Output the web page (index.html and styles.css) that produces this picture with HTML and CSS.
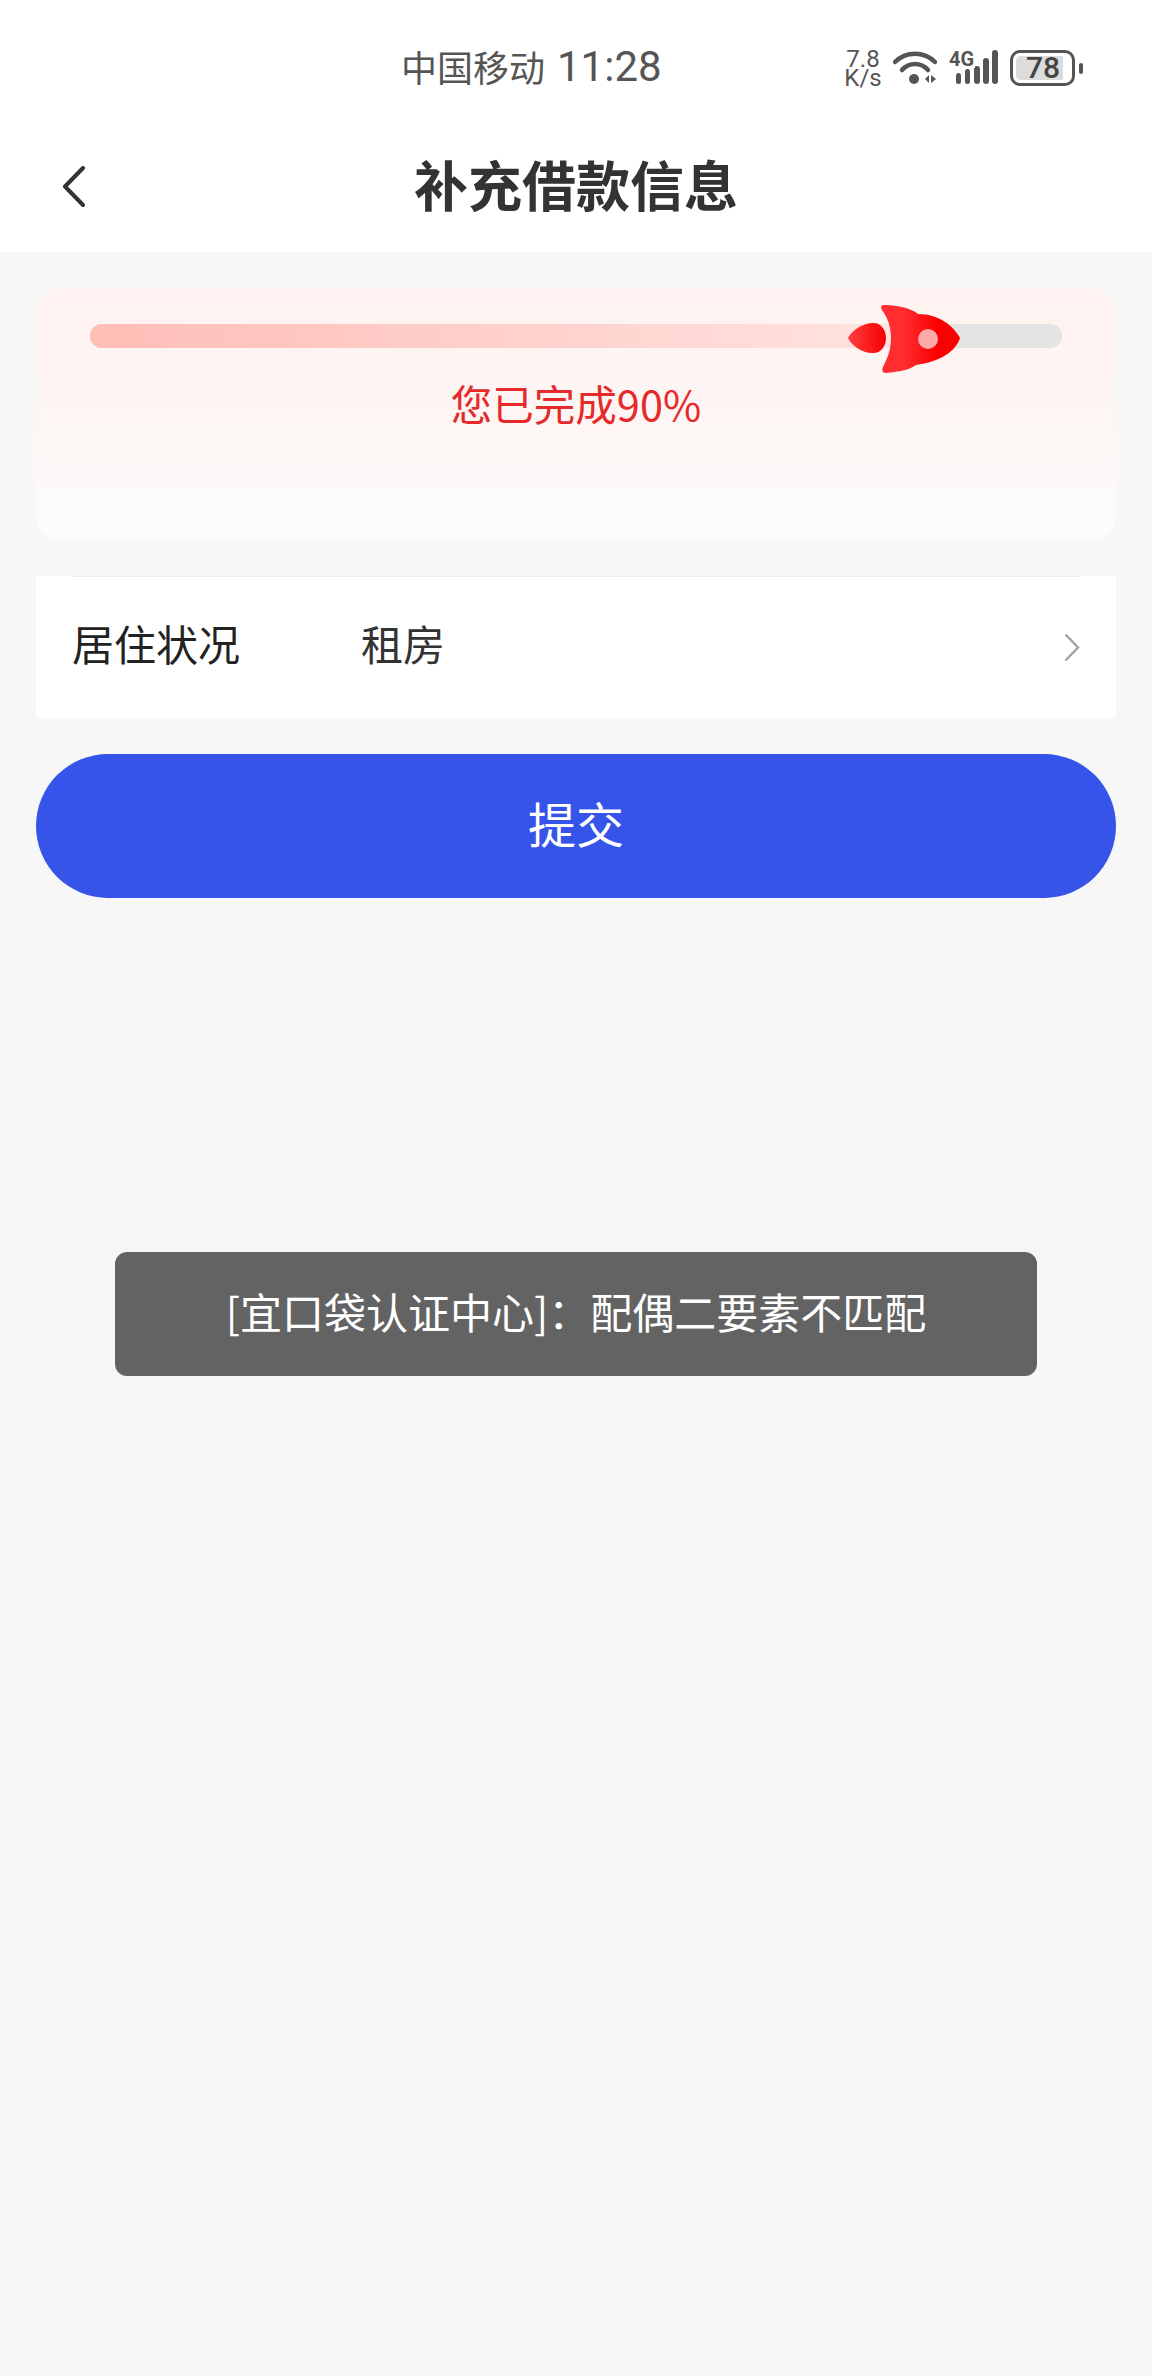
FILE: index.html
```html
<!DOCTYPE html>
<html lang="zh-CN">
<head>
    <meta charset="UTF-8">
    <meta name="viewport" content="width=device-width, initial-scale=1.0">
    <title>补充借款信息</title>
    <link rel="stylesheet" href="styles.css">
</head>
<body>
    <header class="top">
        <div class="status-bar">
            <div class="status-center">
                <span class="carrier">中国移动</span>
                <span class="clock">11:28</span>
            </div>
            <div class="status-right">
                <div class="speed">
                    <span>7.8</span>
                    <span>K/s</span>
                </div>
                <svg class="icon-wifi" width="44" height="34" viewBox="0 0 44 34">
                    <path d="M2 12 C13 1 31 1 42 12" fill="none" stroke="#555" stroke-width="4.5" stroke-linecap="round"/>
                    <path d="M9 20 C16 12 28 12 35 20" fill="none" stroke="#555" stroke-width="4.5" stroke-linecap="round"/>
                    <circle cx="21" cy="29" r="5" fill="#555"/>
                    <path d="M36 25 V33 L32 29 Z" fill="#555"/>
                    <path d="M38 25 V33 L43 29 Z" fill="#555"/>
                </svg>
                <div class="signal">
                    <span class="signal-label">4G</span>
                    <svg width="50" height="34" viewBox="0 0 50 34">
                        <rect x="7" y="23" width="5" height="11" rx="2.5" fill="#555"/>
                        <rect x="16" y="19" width="5" height="15" rx="2.5" fill="#555"/>
                        <rect x="25" y="16" width="6" height="18" rx="3" fill="#555"/>
                        <rect x="34" y="8" width="6" height="26" rx="3" fill="#555"/>
                        <rect x="43" y="0" width="6" height="34" rx="3" fill="#555"/>
                    </svg>
                </div>
                <div class="battery">
                    <div class="battery-body">
                        <div class="battery-level"></div>
                        <span class="battery-num">78</span>
                    </div>
                    <div class="battery-nub"></div>
                </div>
            </div>
        </div>
        <div class="nav">
            <svg class="back" width="24" height="42" viewBox="0 0 24 42">
                <path d="M21 2 L3 20.5 L21 39" fill="none" stroke="#333" stroke-width="4" stroke-linecap="round" stroke-linejoin="round"/>
            </svg>
            <h1>补充借款信息</h1>
        </div>
    </header>

    <main class="content">
        <section class="progress-card">
            <div class="progress-top">
                <div class="track">
                    <div class="track-fill"></div>
                    <svg class="rocket" width="112" height="68" viewBox="0 0 112 68">
                        <defs>
                            <linearGradient id="rocketRed" x1="0" y1="0" x2="1" y2="0">
                                <stop offset="0" stop-color="#ff3f42"/>
                                <stop offset="1" stop-color="#f60000"/>
                            </linearGradient>
                            <linearGradient id="rocketBody" x1="0" y1="0" x2="1" y2="0">
                                <stop offset="0.3" stop-color="#ff2c30"/>
                                <stop offset="0.7" stop-color="#fb0000"/>
                            </linearGradient>
                        </defs>
                        <path d="M0 33 C4 25 15 18 25 18 C34 18 38 26 38 33 C38 41 33 49 24 48 C14 48 4 41 0 33 Z" fill="url(#rocketRed)"/>
                        <path d="M35 0 C46 0 62 2 70 9 C90 9 105 20 112 33 C108 46 92 57 68 60 C60 66 46 67 38 68 C33 68 34 63 36 60 C41 50 43 42 43 33 C43 24 41 16 36 8 C33 4 32 1 35 0 Z" fill="url(#rocketBody)"/>
                        <circle cx="80" cy="34" r="10" fill="#ffa9a9"/>
                    </svg>
                </div>
                <p class="progress-text">您已完成90%</p>
            </div>
            <div class="progress-bottom"></div>
        </section>

        <section class="info-row">
            <span class="info-label">居住状况</span>
            <span class="info-value">租房</span>
            <svg class="arrow" width="16" height="29" viewBox="0 0 16 29">
                <path d="M1.5 1.5 L14 14.5 L1.5 27.5" fill="none" stroke="#a3a3a3" stroke-width="2.5"/>
            </svg>
        </section>

        <a href="#" class="btn-submit">提交</a>
    </main>

    <div class="toast">[宜口袋认证中心]：配偶二要素不匹配</div>
</body>
</html>
```

FILE: styles.css
```css
* {
    margin: 0;
    padding: 0;
    box-sizing: border-box;
}

html,
body {
    height: 2376px;
    overflow: hidden;
}

body {
    position: relative;
    font-family: "Noto Sans CJK SC", "Noto Sans", sans-serif;
    background-color: #f7f7f7;
    color: #222;
}

.top {
    height: 252px;
    background: #fff;
}

.status-bar {
    position: relative;
    height: 136px;
    padding-left: 401px;
    display: flex;
    align-items: center;
    color: #555;
}

.status-center {
    display: flex;
    align-items: center;
    gap: 12px;
}

.carrier {
    font-size: 36px;
    margin-bottom: 4px;
}

.clock {
    font-family: Roboto, sans-serif;
    font-size: 42px;
    margin-bottom: 3px;
}

.status-right {
    position: absolute;
    top: 50px;
    left: 846px;
    display: flex;
    align-items: flex-start;
}

.speed {
    width: 34px;
    margin-right: 13px;
    display: flex;
    flex-direction: column;
    align-items: center;
    font-family: Roboto, sans-serif;
    font-size: 24px;
    line-height: 19px;
}

.icon-wifi {
    margin-right: 12px;
}

.signal {
    position: relative;
    width: 50px;
    height: 34px;
    margin-right: 11px;
}

.signal-label {
    position: absolute;
    top: 0;
    left: 0;
    font-family: Roboto, sans-serif;
    font-size: 20px;
    font-weight: 700;
    line-height: 18px;
    background: #fff;
    padding-right: 1px;
}

.signal svg {
    display: block;
}

.battery {
    display: flex;
    align-items: center;
    gap: 4px;
}

.battery-body {
    position: relative;
    width: 65px;
    height: 36px;
    border: 3px solid #555;
    border-radius: 10px;
    padding: 3px;
}

.battery-level {
    width: 47px;
    height: 100%;
    background: #dcdcdc;
    border-radius: 5px 0 0 5px;
}

.battery-num {
    position: absolute;
    top: 0;
    left: 13px;
    font-family: Roboto, sans-serif;
    font-size: 30px;
    font-weight: 500;
    line-height: 30px;
    color: #444;
}

.battery-nub {
    width: 4px;
    height: 11px;
    background: #555;
    border-radius: 2px;
}

.nav {
    position: relative;
    height: 100px;
    display: flex;
    align-items: center;
    justify-content: center;
}

.back {
    position: absolute;
    left: 62px;
    top: 30px;
}

.nav h1 {
    font-size: 54px;
    font-weight: 700;
    color: #333;
    margin-bottom: 6px;
}

.content {
    padding: 36px 36px 0;
}

.progress-card {
    height: 252px;
    border-radius: 24px;
    overflow: hidden;
    display: flex;
    flex-direction: column;
}

.progress-top {
    height: 200px;
    padding: 36px 54px 0;
    background: linear-gradient(180deg, #fff2f0, #fcf8f7);
}

.progress-bottom {
    flex: 1;
    background: #fdfcfb;
}

.track {
    position: relative;
    height: 24px;
    background: #e4e4e4;
    border-radius: 12px;
}

.track-fill {
    width: 800px;
    height: 100%;
    border-radius: 12px 0 0 12px;
    background: linear-gradient(90deg, #ffbdb7, #ffe2df);
}

.rocket {
    position: absolute;
    left: 758px;
    top: -19px;
}

.progress-text {
    margin-top: 26px;
    text-align: center;
    font-size: 41.5px;
    line-height: 58px;
    color: #e62a2a;
}

.info-row {
    position: relative;
    height: 142px;
    margin-top: 36px;
    padding: 0 36px;
    background: #fff;
    display: flex;
    align-items: center;
}

.info-row::before {
    content: "";
    position: absolute;
    top: 0;
    left: 36px;
    right: 36px;
    height: 1px;
    background: #ececec;
}

.info-label {
    width: 289px;
    font-size: 42px;
    margin-bottom: 9px;
}

.info-value {
    font-size: 42px;
    color: #333;
    margin-bottom: 9px;
}

.arrow {
    margin-left: auto;
}

.btn-submit {
    display: flex;
    align-items: center;
    justify-content: center;
    height: 144px;
    margin-top: 36px;
    padding-bottom: 9px;
    background: #3653ea;
    border-radius: 72px;
    color: #fff;
    font-size: 48px;
    text-decoration: none;
}

.toast {
    position: absolute;
    top: 1252px;
    left: 115px;
    width: 922px;
    height: 124px;
    padding-bottom: 8px;
    display: flex;
    align-items: center;
    justify-content: center;
    background: #636363;
    border-radius: 12px;
    color: #fff;
    font-size: 42px;
}
```
